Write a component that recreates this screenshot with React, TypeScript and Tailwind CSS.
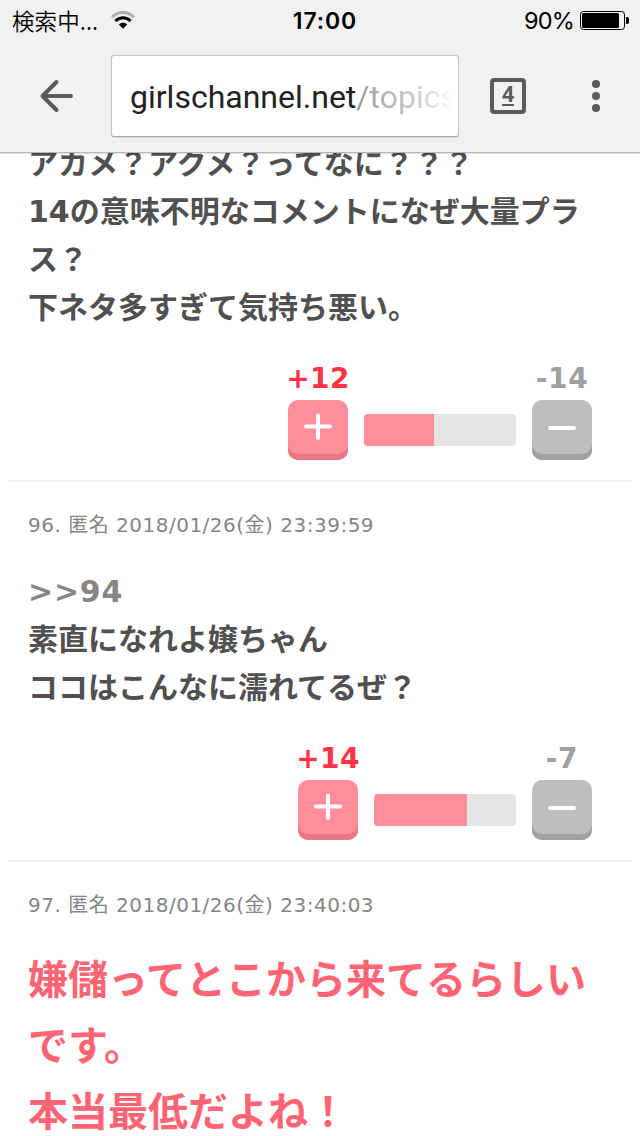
import { ReactNode } from "react"
import clsx from "clsx"

type Comment = {
  id: number
  date?: string
  reply?: string
  lines: string[]
  large?: boolean
  votes?: { plus: number; minus: number; barClass: string; fillClass: string }
}

const comments: Comment[] = [
  {
    id: 95,
    lines: [
      "アカメ？アクメ？ってなに？？？",
      "14の意味不明なコメントになぜ大量プラ",
      "ス？",
      "下ネタ多すぎて気持ち悪い。",
    ],
    votes: { plus: 12, minus: 14, barClass: "w-[152px]", fillClass: "w-[70px]" },
  },
  {
    id: 96,
    date: "2018/01/26(金) 23:39:59",
    reply: ">>94",
    lines: ["素直になれよ嬢ちゃん", "ココはこんなに濡れてるぜ？"],
    votes: { plus: 14, minus: 7, barClass: "w-[142px]", fillClass: "w-[93px]" },
  },
  {
    id: 97,
    date: "2018/01/26(金) 23:40:03",
    lines: ["嫌儲ってとこから来てるらしい", "です。", "本当最低だよね！"],
    large: true,
  },
]

function StatusBar() {
  return (
    <div className="flex h-10 items-center justify-between pr-[11px] pl-3 text-black">
      <div className="flex w-[200px] items-center gap-3">
        <span className="text-[22.5px] leading-10 tracking-[0.1px] font-[350]">検索中...</span>
        <svg width="26" height="20" viewBox="0 0 26 20" fill="none">
          <path d="M2 7.2C8.2 .8 17.8 .8 24 7.2" stroke="#b0b0b0" strokeWidth="3" />
          <path d="M5.4 11C9.7 6.7 16.3 6.7 20.6 11" stroke="#000" strokeWidth="3" />
          <path d="M8.8 14.5C11.2 12.1 14.8 12.1 17.2 14.5L13 18.7Z" fill="#000" />
        </svg>
      </div>
      <span className="pt-[2px] pl-[9px] text-center font-[Inter] text-[23px] font-semibold tracking-[0.9px]">17:00</span>
      <div className="flex w-[200px] items-center justify-end gap-[6px]">
        <span className="pt-[2px] font-[Inter] text-[23.5px] tracking-[-0.8px]">90%</span>
        <svg width="49" height="19" viewBox="0 0 49 19">
          <rect x=".5" y=".5" width="44" height="18" rx="3" fill="none" stroke="#000" />
          <rect x="2" y="2" width="37" height="15" rx="1.5" />
          <path d="M46 6h1a2 2 0 0 1 2 2v3a2 2 0 0 1-2 2h-1z" />
        </svg>
      </div>
    </div>
  )
}

function AddressBar() {
  return (
    <div className="flex h-28 items-center">
      <div className="flex w-[110px] justify-center pl-[2px]">
        <svg width="34" height="34" viewBox="0 0 34 34" fill="none" stroke="#5a5a5a" strokeWidth="4" strokeLinecap="round" strokeLinejoin="round">
          <path d="M32 17H4M17.500 3L3.500 17l14 14" />
        </svg>
      </div>
      <div className="ml-px flex h-[82px] w-[348px] items-center rounded-[3px] border border-[#c4c4c4] border-b-[#a5a5a5] bg-white pt-[2px] pl-[18px] shadow-[0_1px_1px_rgba(0,0,0,0.1)]">
        <span className="font-[Roboto] text-[32px] leading-[48px] whitespace-nowrap text-[#222]">
          girlschannel.net
          <span className="bg-linear-to-r from-[#999] via-[#d0d0d0] via-65% to-white to-97% bg-clip-text text-transparent">/topics</span>
        </span>
      </div>
      <div className="ml-[31px] flex size-9 items-center justify-center rounded-[4px] border-4 border-[#5a5a5a] font-[Roboto] text-[22px] font-bold text-[#5a5a5a]">
        <span className="border-b-2 border-[#5a5a5a] leading-[18px]">4</span>
      </div>
      <div className="ml-[66px] flex flex-col gap-1">
        <span className="size-2 rounded-full bg-[#5a5a5a]" />
        <span className="size-2 rounded-full bg-[#5a5a5a]" />
        <span className="size-2 rounded-full bg-[#5a5a5a]" />
      </div>
    </div>
  )
}

function VoteButton({ minus, children }: { minus?: boolean; children: ReactNode }) {
  return (
    <button
      className={clsx(
        "flex size-[60px] justify-center rounded-[10px]",
        minus ? "bg-[#bebebe] shadow-[inset_0_-6px_0_#a1a1a1]" : "bg-[#ff8d9a] shadow-[inset_0_-6px_0_#e87683]",
      )}
    >
      <svg width="60" height="56" viewBox="0 0 60 56" fill="none" stroke="#fff" strokeWidth="4" strokeLinecap="round">
        {children}
      </svg>
    </button>
  )
}

function Votes({ plus, minus, barClass, fillClass }: NonNullable<Comment["votes"]>) {
  return (
    <div className="mt-7 flex h-[120px] items-start justify-end gap-4 pr-10 font-bold">
      <div className="w-[60px]">
        <p className="flex h-10 items-start justify-center text-[28px] leading-[38px] tracking-[0.3px] whitespace-nowrap text-[#ff3344]">
          +{plus}
        </p>
        <VoteButton>
          <path d="M18 26.500h24M30 15.500v22.500" />
        </VoteButton>
      </div>
      <div className={clsx("mt-[54px] h-8 overflow-hidden rounded-[4px] bg-[#e5e5e5]", barClass)}>
        <div className={clsx("h-full bg-[#ff8d9a]", fillClass)} />
      </div>
      <div className="w-[60px]">
        <p className="flex h-10 items-start justify-center text-[28px] leading-[38px] tracking-[0.7px] whitespace-nowrap text-[#a0a0a0]">
          -{minus}
        </p>
        <VoteButton minus>
          <path d="M18 28h24" />
        </VoteButton>
      </div>
    </div>
  )
}

function CommentItem({ comment }: { comment: Comment }) {
  return (
    <li className="mx-2 border-b-2 border-[#f1f1f1] pl-5">
      {comment.date && (
        <p className="mb-[27px] pt-7 text-[20px] leading-[30px] tracking-[0.5px] text-[#858585]">
          {comment.id}. 匿名 {comment.date}
        </p>
      )}
      <div
        className={clsx(
          "font-bold whitespace-nowrap",
          comment.large ? "text-[40px] leading-[66px] text-[#ff6474]" : "pt-px text-[30px] leading-[48px] text-[#505050]",
        )}
      >
        {comment.reply && <p className="tracking-[0.8px] text-[#858585]">{comment.reply}</p>}
        {comment.lines.map((line) => (
          <p key={line}>{line}</p>
        ))}
      </div>
      {comment.votes && <Votes {...comment.votes} />}
    </li>
  )
}

export default function App() {
  return (
    <div className="flex h-[1136px] w-[640px] flex-col overflow-hidden bg-white font-['DejaVu_Sans','Noto_Sans_CJK_JP',sans-serif]">
      <header className="z-10 h-[153px] shrink-0 border-b border-[#b8b8b8] bg-[#f1f1f1] font-['Noto_Sans_CJK_JP',sans-serif] shadow-[0_1px_1px_rgba(0,0,0,0.12)]">
        <StatusBar />
        <AddressBar />
      </header>
      <main className="min-h-0 flex-1 overflow-hidden">
        <ul className="-mt-[14px]">
          {comments.map((comment) => (
            <CommentItem key={comment.id} comment={comment} />
          ))}
        </ul>
      </main>
    </div>
  )
}
